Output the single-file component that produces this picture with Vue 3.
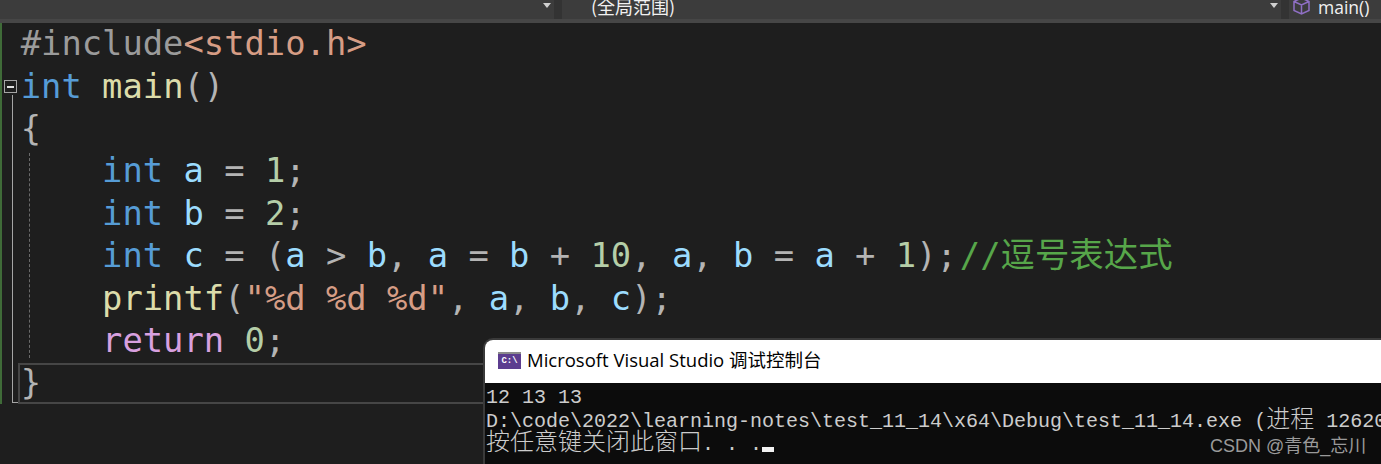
<script setup>
const lines = [
  [['inc', '#include'], ['str', '<stdio.h>']],
  [['kw', 'int'], ['', ' '], ['fn', 'main'], ['pun', '()']],
  [['pun', '{']],
  [['', '    '], ['kw', 'int'], ['', ' '], ['var', 'a'], ['pun', ' = '], ['num', '1'], ['pun', ';']],
  [['', '    '], ['kw', 'int'], ['', ' '], ['var', 'b'], ['pun', ' = '], ['num', '2'], ['pun', ';']],
  [['', '    '], ['kw', 'int'], ['', ' '], ['var', 'c'], ['pun', ' = ('], ['var', 'a'], ['pun', ' > '], ['var', 'b'], ['pun', ', '], ['var', 'a'], ['pun', ' = '], ['var', 'b'], ['pun', ' + '], ['num', '10'], ['pun', ', '], ['var', 'a'], ['pun', ', '], ['var', 'b'], ['pun', ' = '], ['var', 'a'], ['pun', ' + '], ['num', '1'], ['pun', ');'], ['com', '//'], ['cjk', '逗号表达式']],
  [['', '    '], ['fn', 'printf'], ['pun', '('], ['str', '"%d %d %d"'], ['pun', ', '], ['var', 'a'], ['pun', ', '], ['var', 'b'], ['pun', ', '], ['var', 'c'], ['pun', ');']],
  [['', '    '], ['ret', 'return'], ['', ' '], ['num', '0'], ['pun', ';']],
  [['pun', '}']],
]
</script>

<template>
  <div class="page">
    <header class="bar">
      <div class="seg seg-a"><span class="arrow"></span></div>
      <div class="seg seg-b">
        <span class="scope">(全局范围)</span>
        <span class="arrow"></span>
      </div>
      <div class="seg seg-c">
        <svg class="cube" width="17" height="18" viewBox="0 0 17 18" fill="none" stroke="#8f6fc4" stroke-width="1.5">
          <path d="M8.5 1 16 4.5V13.5L8.5 17 1 13.5V4.5Z M1 4.5 8.5 8 16 4.5 M8.5 8V17" />
        </svg>
        <span class="fname">main()</span>
      </div>
    </header>

    <main class="code">
      <div class="change"></div>
      <div class="fold"><span class="minus"></span></div>
      <div class="fold-line"></div>
      <div class="guide"></div>
      <div class="current"></div>
      <div v-for="(line, i) in lines" :key="i" class="line">
        <span v-for="(t, j) in line" :key="j" :class="t[0]">{{ t[1] }}</span>
      </div>
    </main>

    <section class="console">
      <div class="title">
        <span class="cicon">C:\</span>
        <span class="ttext">Microsoft Visual Studio 调试控制台</span>
      </div>
      <div class="cbody">
        <div class="cl">12 13 13</div>
        <div class="cl">D:\code\2022\learning-notes\test_11_14\x64\Debug\test_11_14.exe (<span class="zh">进程</span> 12620</div>
        <div class="cl"><span class="zh">按任意键关闭此窗口</span>. . .<span class="cursor"></span></div>
      </div>
      <div class="mark">CSDN @青色_忘川</div>
    </section>
  </div>
</template>

<style scoped>
.page {
  position: relative;
  width: 1381px;
  height: 464px;
  overflow: hidden;
  background: #1e1e1e;
}
.bar {
  display: flex;
  gap: 8px;
  height: 23px;
  box-sizing: border-box;
  border-bottom: 4px solid #464646;
  background: #333;
}
.seg {
  position: relative;
  display: flex;
  align-items: center;
  background: #3c3c3c;
  overflow: hidden;
  color: #f1f1f1;
  font-family: "Noto Sans CJK SC", "Noto Sans", sans-serif;
  font-size: 18px;
}
.seg-a { width: 554px; }
.seg-b { width: 719px; padding-left: 29px; box-sizing: border-box; }
.seg-c { flex: 1; gap: 8px; padding-left: 4px; }
.scope { position: relative; top: -4px; line-height: 24px; }
.fname { position: relative; top: -3px; font-family: "Open Sans", sans-serif; font-size: 17.5px; line-height: 24px; }
.cube { position: relative; top: -4px; flex: none; }
.arrow {
  position: absolute;
  right: 3px;
  top: 3px;
  border: 4px solid transparent;
  border-top: 5px solid #d0d0d0;
  border-bottom: 0;
}
.code {
  position: relative;
  height: 441px;
  box-sizing: border-box;
  padding: 0.3px 0 0 20.7px;
  font-family: "DejaVu Sans Mono", monospace;
  font-size: 33.8px;
}
.line {
  height: 42.4px;
  line-height: 42.4px;
  white-space: pre;
}
.inc { color: #9b9b9b; }
.str { color: #d69d85; }
.kw { color: #569cd6; }
.fn { color: #dcdcaa; }
.pun { color: #b4b4b4; }
.var { color: #9cdcfe; }
.num { color: #b5cea8; }
.ret { color: #d8a0df; }
.com { color: #57a64a; margin-left: 3px; }
.cjk {
  color: #57a64a;
  font-family: "Noto Sans CJK SC", sans-serif;
  font-size: 34.4px;
  line-height: 0;
}
.change {
  position: absolute;
  left: 0;
  top: 0;
  width: 2px;
  height: 381px;
  background: #3f6b38;
}
.fold {
  position: absolute;
  left: 4px;
  top: 57px;
  width: 13px;
  height: 13px;
  box-sizing: border-box;
  border: 1px solid #a5a5a5;
  display: flex;
  align-items: center;
  justify-content: center;
}
.minus { width: 7px; height: 2px; background: #e0e0e0; }
.fold-line {
  position: absolute;
  left: 12px;
  top: 72px;
  width: 6px;
  height: 308px;
  box-sizing: border-box;
  border-left: 1px solid #a5a5a5;
  border-bottom: 1px solid #a5a5a5;
}
.guide {
  position: absolute;
  left: 29px;
  top: 130px;
  height: 205px;
  border-left: 1px dashed #6a6a6a;
}
.current {
  position: absolute;
  left: 18px;
  top: 340px;
  width: 480px;
  height: 41px;
  box-sizing: border-box;
  border: 2px solid #464646;
}
.console {
  position: absolute;
  left: 485px;
  top: 340px;
  right: -8px;
  bottom: -8px;
  display: flex;
  flex-direction: column;
  border-radius: 8px 0 0 0;
  overflow: hidden;
  background: #0c0c0c;
  box-shadow: 0 0 0 2px #3a3a3a;
}
.title {
  height: 43px;
  flex: none;
  display: flex;
  align-items: center;
  gap: 6px;
  padding-left: 13px;
  background: #fff;
  color: #000;
}
.cicon {
  width: 23px;
  height: 17px;
  background: #5c3d8f;
  border-top: 2px solid #8c8c8c;
  box-sizing: border-box;
  color: #fff;
  font-family: "Liberation Mono", monospace;
  font-size: 9px;
  font-weight: bold;
  line-height: 15px;
  text-align: center;
  position: relative;
  top: -1px;
}
.ttext {
  font-family: "Open Sans", "Noto Sans CJK SC", sans-serif;
  font-size: 18.5px;
  line-height: 24px;
  position: relative;
  top: -2px;
}
.cbody {
  flex: 1;
  padding: 3px 0 0 1px;
  font-family: "Liberation Mono", monospace;
  font-size: 20px;
  color: #cccccc;
  white-space: pre;
}
.cl { height: 23.5px; line-height: 23.5px; }
.zh { font-family: "Noto Sans CJK SC", sans-serif; font-size: 24px; font-weight: 300; line-height: 0; }
.cursor {
  display: inline-block;
  width: 12px;
  height: 5px;
  vertical-align: -2px;
  background: #f2f2f2;
}
.mark {
  position: absolute;
  left: 725px;
  top: 94px;
  color: #9a9a9a;
  font-family: "Liberation Sans", "Noto Sans CJK SC", sans-serif;
  font-size: 18px;
  line-height: 24px;
}
</style>
